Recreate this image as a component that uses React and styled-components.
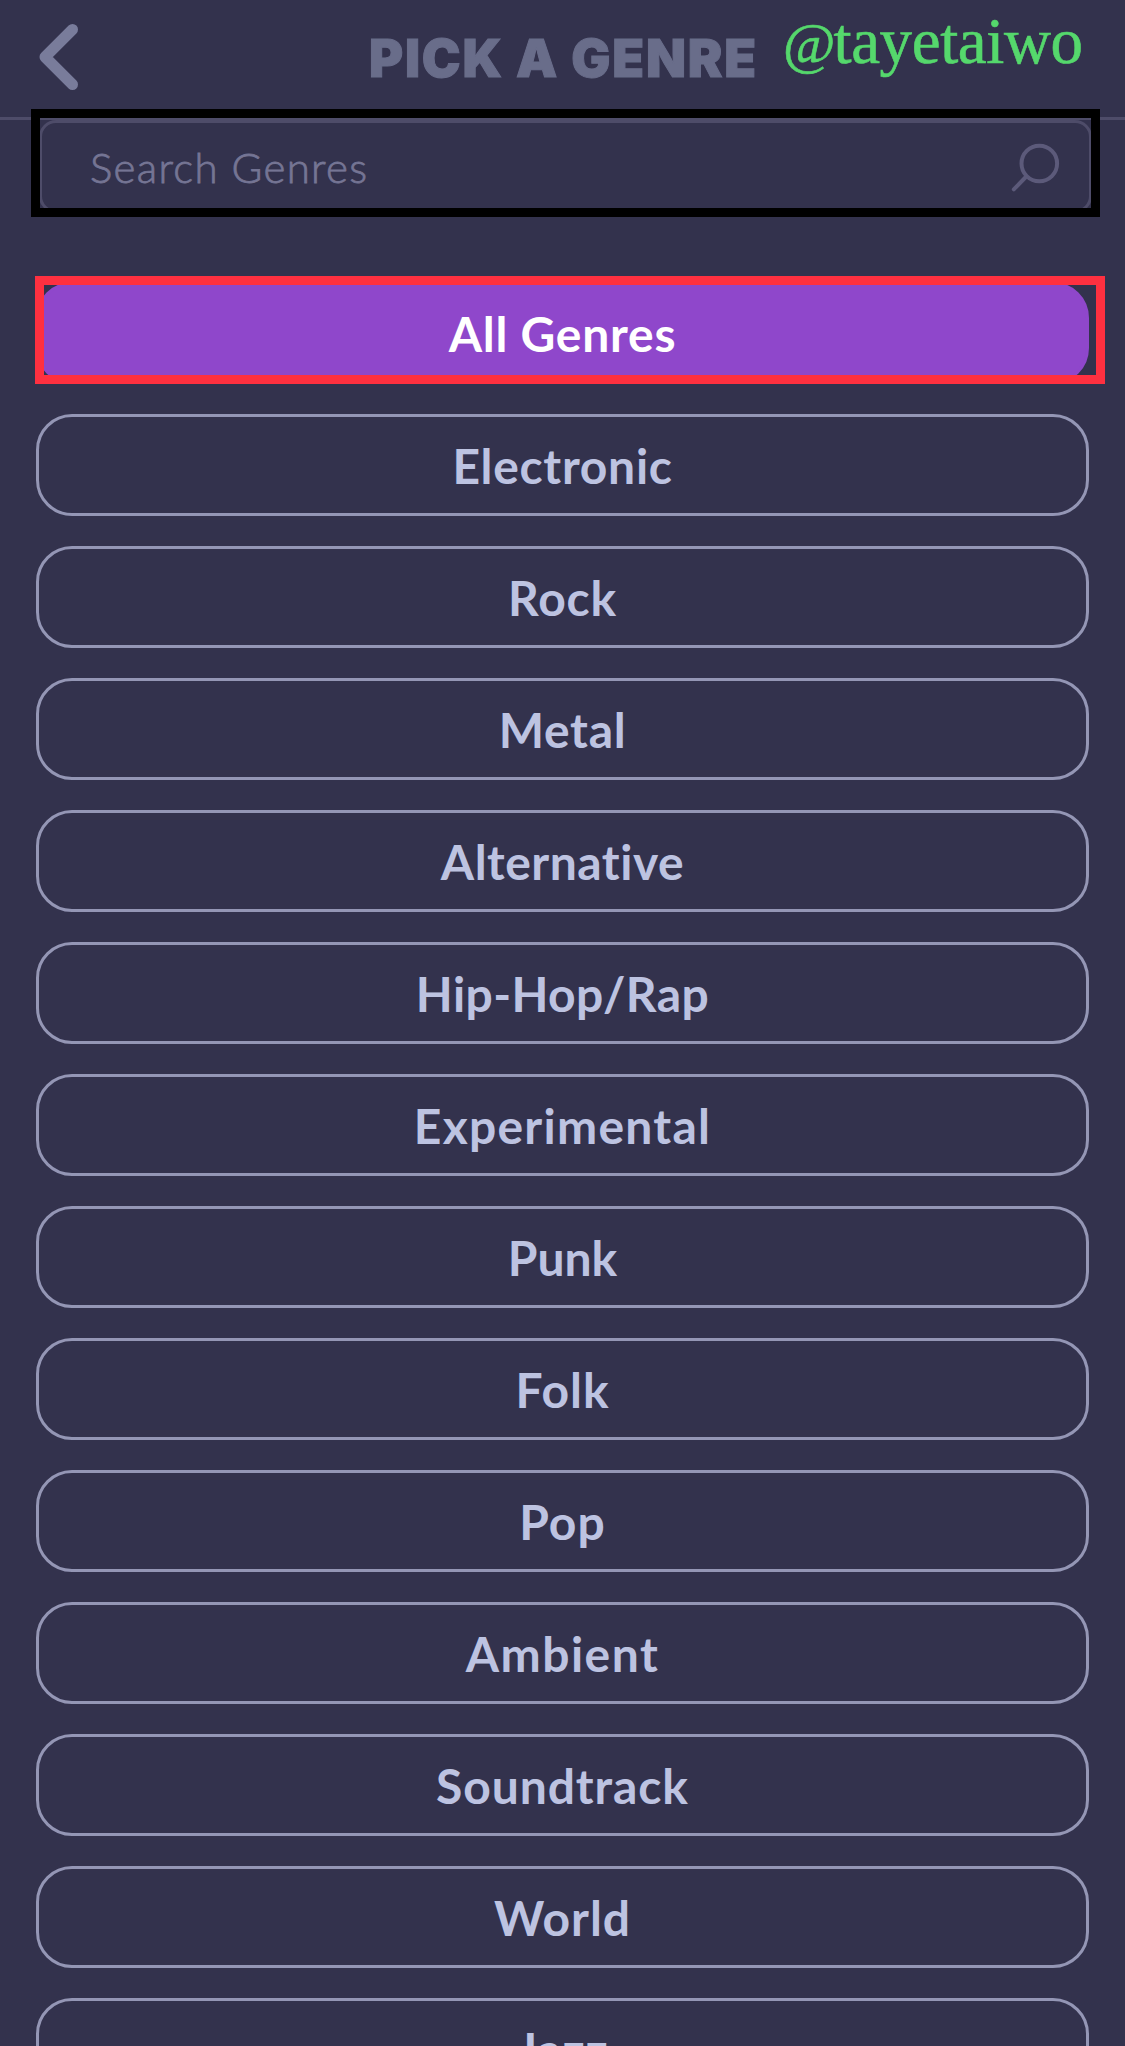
import { useState } from 'react'
// styles
import styled, { createGlobalStyle } from 'styled-components'

const genres = [
    { name: 'All Genres', spacing: 0.75 },
    { name: 'Electronic', spacing: 0.7 },
    { name: 'Rock', spacing: 0.8 },
    { name: 'Metal', spacing: 0.7 },
    { name: 'Alternative', spacing: 0.5 },
    { name: 'Hip-Hop/Rap', spacing: 0.4 },
    { name: 'Experimental', spacing: 1.25 },
    { name: 'Punk', spacing: 0 },
    { name: 'Folk', spacing: 1 },
    { name: 'Pop', spacing: 1 },
    { name: 'Ambient', spacing: 1.5 },
    { name: 'Soundtrack', spacing: 0.9 },
    { name: 'World', spacing: 1 },
    { name: 'Jazz', spacing: 1 },
]

export default function App() {
    const [selected, setSelected] = useState('All Genres')

    return (
        <Screen>
            <GlobalStyle />
            <Header>
                <BackButton aria-label="Back">
                    <svg width="40" height="68" viewBox="0 0 40 68" fill="none">
                        <path d="M33.5 6.5 L6 34 L33.5 61.5" stroke="#797c9b" strokeWidth="11" strokeLinecap="round" strokeLinejoin="round" />
                    </svg>
                </BackButton>
                <Title>PICK A GENRE</Title>
                <Handle>
                    <At>@</At>tayetaiwo
                </Handle>
            </Header>
            <Search>
                <SearchInput placeholder="Search Genres" />
                <svg width="50" height="50" viewBox="0 0 50 50" fill="none" stroke="#5c5a7a" strokeWidth="4">
                    <circle cx="29.3" cy="21.5" r="17.8" />
                    <path d="M16.3 34.5 L3.8 47.3" strokeLinecap="round" />
                </svg>
            </Search>
            <GenreList>
                {genres.map(({ name, spacing }) => (
                    <Genre key={name} $active={name === selected} $spacing={spacing} onClick={() => setSelected(name)}>
                        {name}
                    </Genre>
                ))}
            </GenreList>
        </Screen>
    )
}

const GlobalStyle = createGlobalStyle`
    *,
    *:before,
    *:after {
        box-sizing: border-box;
    }

    body {
        margin: 0;
        background: #33324d;
    }
`

const Screen = styled.div`
    display: flex;
    flex-direction: column;
    height: 2046px;
    overflow: hidden;
    background: #33324d;
    font-family: Lato, 'Open Sans', sans-serif;
`

const Header = styled.header`
    display: grid;
    grid-template-columns: 1fr 387px 1fr;
    flex: none;
    height: 120px;
    border-bottom: 3px solid #4e4c69;
`

const BackButton = styled.button`
    justify-self: start;
    align-self: start;
    margin: 23px 0 0 38.5px;
    padding: 0;
    border: 0;
    background: none;
    line-height: 0;
    cursor: pointer;
`

const Title = styled.h1`
    margin: 27px 0 0;
    color: #696d8a;
    font-family: Inter, sans-serif;
    font-size: 52px;
    font-weight: 900;
    line-height: 64px;
    letter-spacing: 1.8px;
    white-space: nowrap;
    -webkit-text-stroke: 1px #696d8a;
`

const Handle = styled.span`
    margin: 4px 0 0 27px;
    color: #55d86c;
    font-family: 'Liberation Serif', serif;
    font-size: 65px;
    line-height: 74px;
    letter-spacing: -0.4px;
    white-space: nowrap;
    -webkit-text-stroke: 0.6px #55d86c;
`

const At = styled.span`
    font-size: 57px;
    letter-spacing: -2px;
`

const Search = styled.div`
    position: relative;
    display: flex;
    align-items: flex-start;
    flex: none;
    height: 93px;
    margin: 0 33px 0 39px;
    padding: 19px 29px 0 48px;
    border: 3px solid #4e4c69;
    border-radius: 17px;

    &:after {
        position: absolute;
        top: -14px;
        left: -11px;
        width: 1069px;
        height: 108px;
        border: 9px solid #000;
        content: '';
        pointer-events: none;
    }
`

const SearchInput = styled.input`
    flex: 1;
    height: 50px;
    padding: 0;
    border: 0;
    outline: 0;
    background: none;
    color: #757594;
    font-family: inherit;
    font-size: 42px;
    font-weight: 300;
    letter-spacing: 1.3px;
    -webkit-text-stroke: 0.8px #757594;

    &::placeholder {
        color: #757594;
        opacity: 1;
    }
`

const GenreList = styled.div`
    display: flex;
    flex-direction: column;
    gap: 30px;
    margin-top: 69px;
    padding: 0 36px;
`

const Genre = styled.button`
    position: relative;
    flex: none;
    height: 102px;
    padding: 2px 0 0;
    border: 3px solid ${({ $active }) => ($active ? '#8f47cb' : '#9496b5')};
    border-radius: 36px;
    background: ${({ $active }) => ($active ? '#8f47cb' : 'none')};
    color: ${({ $active }) => ($active ? '#fff' : '#bdc3e1')};
    font-family: inherit;
    font-size: 48px;
    font-weight: 700;
    line-height: 58px;
    letter-spacing: ${({ $spacing }) => $spacing}px;
    cursor: pointer;

    &:after {
        display: ${({ $active }) => ($active ? 'block' : 'none')};
        position: absolute;
        top: -9px;
        left: -4px;
        width: 1070px;
        height: 108px;
        border: 9px solid #ff3040;
        content: '';
        pointer-events: none;
    }
`
